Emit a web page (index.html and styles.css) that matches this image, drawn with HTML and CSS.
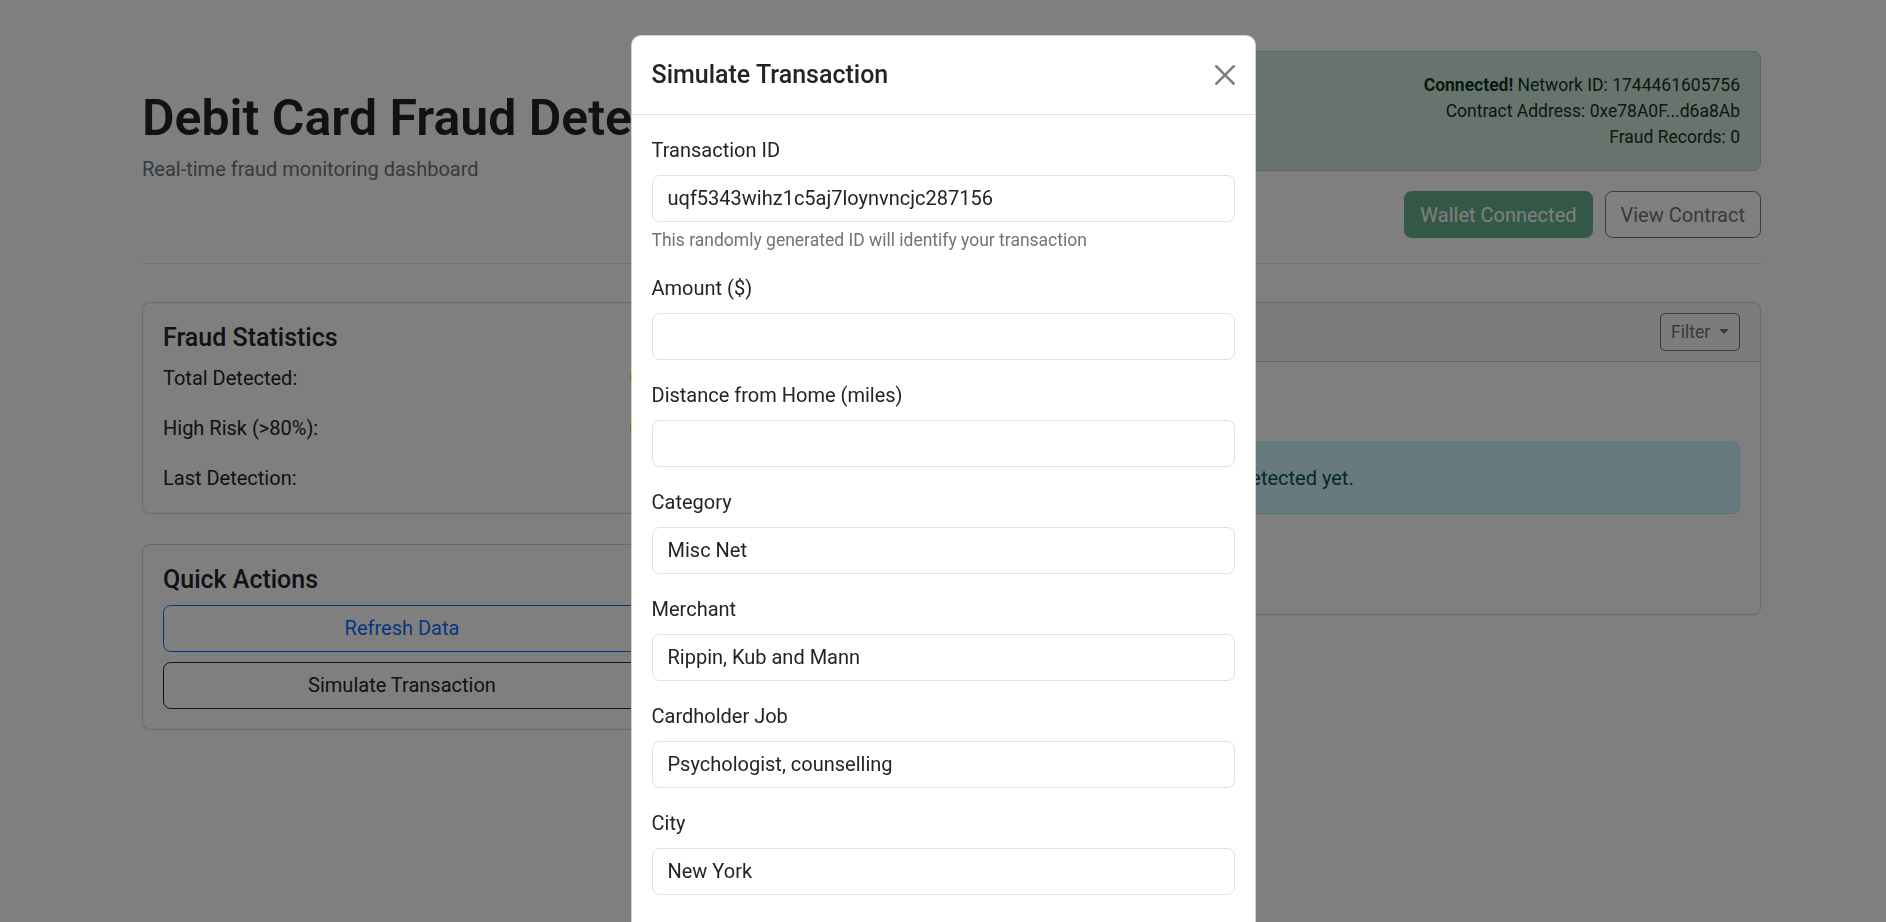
FILE: index.html
```html
<!DOCTYPE html>
<html lang="en">
<head>
<meta charset="utf-8">
<title>Debit Card Fraud Detection</title>
<link rel="stylesheet" href="styles.css">
</head>
<body>
<div class="page">
  <header class="header">
    <div class="header-main">
      <h1 class="title">Debit Card Fraud Detection</h1>
      <p class="subtitle">Real-time fraud monitoring dashboard</p>
    </div>
    <div class="header-side">
      <div class="alert alert-status">
        <div><strong>Connected!</strong> Network ID: 1744461605756</div>
        <div>Contract Address: 0xe78A0F...d6a8Ab</div>
        <div>Fraud Records: 0</div>
      </div>
      <div class="header-actions">
        <button class="btn btn-wallet" disabled>Wallet Connected</button>
        <button class="btn btn-outline-secondary">View Contract</button>
      </div>
    </div>
  </header>
  <hr class="divider">
  <div class="dashboard">
    <div class="col-side">
      <div class="card">
        <div class="card-body">
          <h5 class="card-title">Fraud Statistics</h5>
          <div class="stat-row"><span>Total Detected:</span><span class="stat-value">0</span></div>
          <div class="stat-row"><span>High Risk (&gt;80%):</span><span class="stat-value">0</span></div>
          <div class="stat-row"><span>Last Detection:</span><span class="stat-muted">-</span></div>
        </div>
      </div>
      <div class="card card-actions">
        <div class="card-body">
          <h5 class="card-title">Quick Actions</h5>
          <div class="action-grid">
            <button class="btn btn-outline-primary">Refresh Data</button>
            <button class="btn btn-outline-dark">Simulate Transaction</button>
          </div>
        </div>
      </div>
    </div>
    <div class="col-main">
      <div class="card">
        <div class="card-header">
          <h5 class="card-header-title">Recent Fraud Detections</h5>
          <button class="btn btn-sm btn-outline-secondary">Filter <span class="caret"></span></button>
        </div>
        <div class="card-body">
          <div class="alert alert-info alert-empty">No fraud cases detected yet.</div>
        </div>
      </div>
    </div>
  </div>
</div>

<div class="backdrop"></div>
<div class="modal">
  <div class="modal-dialog">
    <div class="modal-content">
      <div class="modal-header">
        <h5 class="modal-title">Simulate Transaction</h5>
        <button class="btn-close" aria-label="Close">
          <svg viewBox="0 0 16 16" width="20" height="20"><path d="M.293.293a1 1 0 0 1 1.414 0L8 6.586 14.293.293a1 1 0 1 1 1.414 1.414L9.414 8l6.293 6.293a1 1 0 0 1-1.414 1.414L8 9.414l-6.293 6.293a1 1 0 0 1-1.414-1.414L6.586 8 .293 1.707a1 1 0 0 1 0-1.414z"/></svg>
        </button>
      </div>
      <div class="modal-body">
        <div class="form-group">
          <label class="form-label">Transaction ID</label>
          <input class="form-control" type="text" value="uqf5343wihz1c5aj7loynvncjc287156">
          <div class="form-text">This randomly generated ID will identify your transaction</div>
        </div>
        <div class="form-group">
          <label class="form-label">Amount ($)</label>
          <input class="form-control" type="text" value="">
        </div>
        <div class="form-group">
          <label class="form-label">Distance from Home (miles)</label>
          <input class="form-control" type="text" value="">
        </div>
        <div class="form-group">
          <label class="form-label">Category</label>
          <input class="form-control" type="text" value="Misc Net">
        </div>
        <div class="form-group">
          <label class="form-label">Merchant</label>
          <input class="form-control" type="text" value="Rippin, Kub and Mann">
        </div>
        <div class="form-group">
          <label class="form-label">Cardholder Job</label>
          <input class="form-control" type="text" value="Psychologist, counselling">
        </div>
        <div class="form-group">
          <label class="form-label">City</label>
          <input class="form-control" type="text" value="New York">
        </div>
      </div>
    </div>
  </div>
</div>
</body>
</html>
```
FILE: styles.css
```css
* { box-sizing: border-box; }
html, body { margin: 0; height: 100%; }
body {
  font-family: "Segoe UI", Roboto, "Liberation Sans", sans-serif;
  font-size: 20px;
  line-height: 1.5;
  color: #212529;
  background: #fff;
  overflow: hidden;
}

.page { padding: 50.5px 125px 0 142px; }

/* header */
.header { display: flex; align-items: center; gap: 30px; }
.header-main { flex: 1 1 auto; min-width: 0; }
.title {
  margin: 0 0 6px;
  padding-top: 4px;
  font-size: 50px;
  font-weight: 600;
  line-height: 1.2;
  white-space: nowrap;
}
.subtitle { margin: 0 0 20px; color: #6c757d; }
.header-side {
  flex: 0 0 810px;
  display: flex;
  flex-direction: column;
  align-items: flex-end;
}
.alert {
  border: 1px solid transparent;
  border-radius: 7.5px;
  padding: 20px;
}
.alert-status {
  align-self: stretch;
  margin-bottom: 20px;
  text-align: right;
  font-size: 17.5px;
  background: #d1e7dd;
  border-color: #a3cfbb;
  color: #0a3622;
}
.alert-status strong { font-weight: 700; }
.header-actions { display: flex; gap: 12px; }

.btn {
  display: inline-block;
  font-family: inherit;
  font-size: 20px;
  line-height: 1.5;
  padding: 7.5px 15px;
  border: 1px solid transparent;
  border-radius: 7.5px;
  background: transparent;
  color: #212529;
  text-align: center;
  cursor: pointer;
}
.btn-wallet { background: #198754; border-color: #198754; color: #fff; opacity: .65; }
.btn-outline-secondary { border-color: #6c757d; color: #6c757d; }
.btn-outline-primary { border-color: #0d6efd; color: #0d6efd; }
.btn-outline-dark { border-color: #212529; color: #212529; }
.btn-sm { font-size: 17.5px; padding: 5px 10px; border-radius: 5px; }
.caret {
  display: inline-block;
  margin-left: 4.5px;
  vertical-align: 3.5px;
  border-top: 5.25px solid;
  border-right: 5.25px solid transparent;
  border-left: 5.25px solid transparent;
  border-bottom: 0;
}

.divider {
  margin: 24.5px 0 38px;
  border: 0;
  border-top: 1px solid rgba(0, 0, 0, .1);
}

/* dashboard */
.dashboard { display: flex; align-items: flex-start; gap: 30px; }
.col-side { flex: 0 0 520px; }
.col-main { flex: 1 1 auto; min-width: 0; }
.card {
  background: #fff;
  border: 1px solid rgba(0, 0, 0, .175);
  border-radius: 7.5px;
}
.card-actions { margin-top: 30px; }
.card-body { padding: 20px; }
.card-title {
  margin: 0 0 10px;
  font-size: 25px;
  font-weight: 500;
  line-height: 1.2;
}
.stat-row {
  display: flex;
  justify-content: space-between;
  align-items: center;
  margin-bottom: 20px;
}
.stat-row:last-child { margin-bottom: 0; }
.stat-value { font-weight: 700; color: #ffc107; }
.stat-muted { color: #6c757d; }
.action-grid { display: grid; gap: 10px; }

.card-header {
  display: flex;
  justify-content: space-between;
  align-items: center;
  padding: 10px 20px;
  background: rgba(33, 37, 41, .03);
  border-bottom: 1px solid rgba(0, 0, 0, .175);
}
.card-header-title { margin: 0; font-size: 25px; font-weight: 500; line-height: 1.2; }
.alert-info { background: #cff4fc; border-color: #9eeaf9; color: #055160; }
.alert-empty { margin: 60px 0 80px; text-align: center; }

/* modal */
.backdrop { position: fixed; inset: 0; background: #000; opacity: .5; }
.modal { position: fixed; inset: 0; overflow: hidden; }
.modal-dialog { width: 625px; margin: 35px auto; }
.modal-content {
  background: #fff;
  border: 1px solid rgba(0, 0, 0, .175);
  border-radius: 10px;
}
.modal-header {
  display: flex;
  align-items: center;
  padding: 20px;
  border-bottom: 1px solid #dee2e6;
}
.modal-title { margin: 0; font-size: 25px; font-weight: 500; line-height: 1.5; }
.btn-close {
  width: 40px;
  height: 40px;
  padding: 10px;
  margin: -10px -10px -10px auto;
  border: 0;
  background: transparent;
  opacity: .5;
  display: flex;
  align-items: center;
  justify-content: center;
}
.btn-close svg { display: block; fill: #000; }
.modal-body { padding: 20px; }
.form-group { margin-bottom: 20px; }
.form-label { display: block; margin-bottom: 10px; }
.form-control {
  display: block;
  width: 100%;
  padding: 7.5px 15px;
  font-family: inherit;
  font-size: 20px;
  line-height: 1.5;
  color: #212529;
  background: #fff;
  border: 1px solid #dee2e6;
  border-radius: 7.5px;
}
.form-text { margin-top: 5px; font-size: 17.5px; color: #6c757d; }
```
